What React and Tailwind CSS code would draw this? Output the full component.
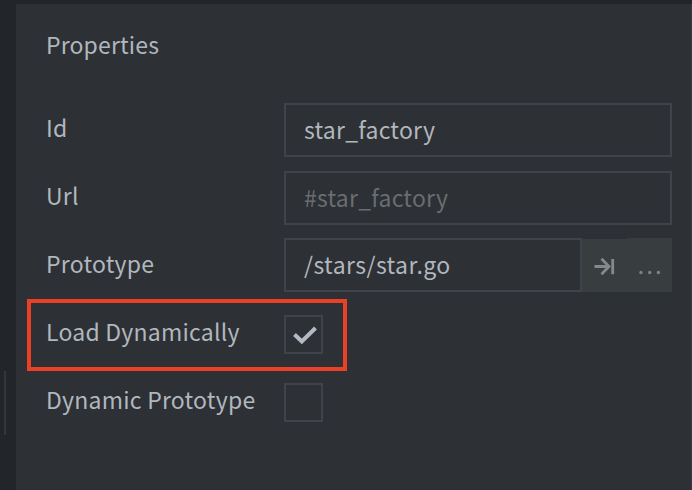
const label = "w-[238px] shrink-0 text-[#b1b7be]";
const field =
  "flex h-[54px] items-center border-2 border-[#40434b] pl-[18px] pb-[2px]";

function Row({ name, children }) {
  return (
    <div className="flex h-[54px] items-center">
      <div className={label}>
        <div className="pb-[6px]">{name}</div>
      </div>
      {children}
    </div>
  );
}

function Checkbox({ checked }) {
  return (
    <div className="mt-[1px] h-[39px] w-[39px] border-2 border-[#40434b]">
      {checked && (
        <svg viewBox="0 0 35 35" className="h-[35px] w-[35px]" fill="none" stroke="#b4bac4" strokeWidth="4">
          <path d="M8.5 17.5 L15.8 24.5 L29.5 11" />
        </svg>
      )}
    </div>
  );
}

export default function App() {
  return (
    <div className="relative flex h-[490px] w-[692px] overflow-hidden bg-[#222529] pt-1 font-['Noto_Sans_CJK_SC',sans-serif] text-[23px] leading-[34px] tracking-[0.23px] whitespace-nowrap">
      <div className="w-4 shrink-0 pl-1 pt-[367px]">
        <div className="h-16 w-[2px] bg-[#33373a]" />
      </div>
      <div className="flex-1 bg-[#2d3034] pl-[30px] pr-[19px] pt-[23px] text-[#b1b7be]">
        <div className="h-[34px] tracking-[0.15px]">Properties</div>
        <div className="mt-[42px] flex flex-col gap-[14px]">
          <Row name="Id">
            <div className={field + " flex-1"}>star_factory</div>
          </Row>
          <Row name="Url">
            <div className={field + " flex-1 text-[#696d72]"}>#star_factory</div>
          </Row>
          <Row name="Prototype">
            <div className={field + " -mt-[2px] w-[298px] tracking-[0.42px]"}>/stars/star.go</div>
            <div className="-mt-[2px] flex h-[54px] w-[90px] items-end">
              <svg viewBox="0 1 45 53" className="h-[53px] w-[45px] bg-[#383d40]" fill="none" stroke="#85898c" strokeWidth="2.8">
                <path d="M12.5 28.5H27M19.5 20.8L27 28.5L19.5 36.2M30.7 21V36.3" />
              </svg>
              <svg viewBox="0 0 45 54" className="h-[54px] w-[45px] bg-[#383d40]" fill="#7e8285">
                <circle cx="14" cy="34.5" r="1.7" />
                <circle cx="22.7" cy="34.5" r="1.7" />
                <circle cx="31.4" cy="34.5" r="1.7" />
              </svg>
            </div>
          </Row>
          <Row name="Load Dynamically">
            <Checkbox checked />
          </Row>
          <Row name="Dynamic Prototype">
            <Checkbox />
          </Row>
        </div>
      </div>
      <div className="w-px bg-[#383b40]" />
      <div className="absolute left-[27px] top-[299px] h-[72px] w-[320px] border-4 border-[#ea4025]" />
    </div>
  );
}
